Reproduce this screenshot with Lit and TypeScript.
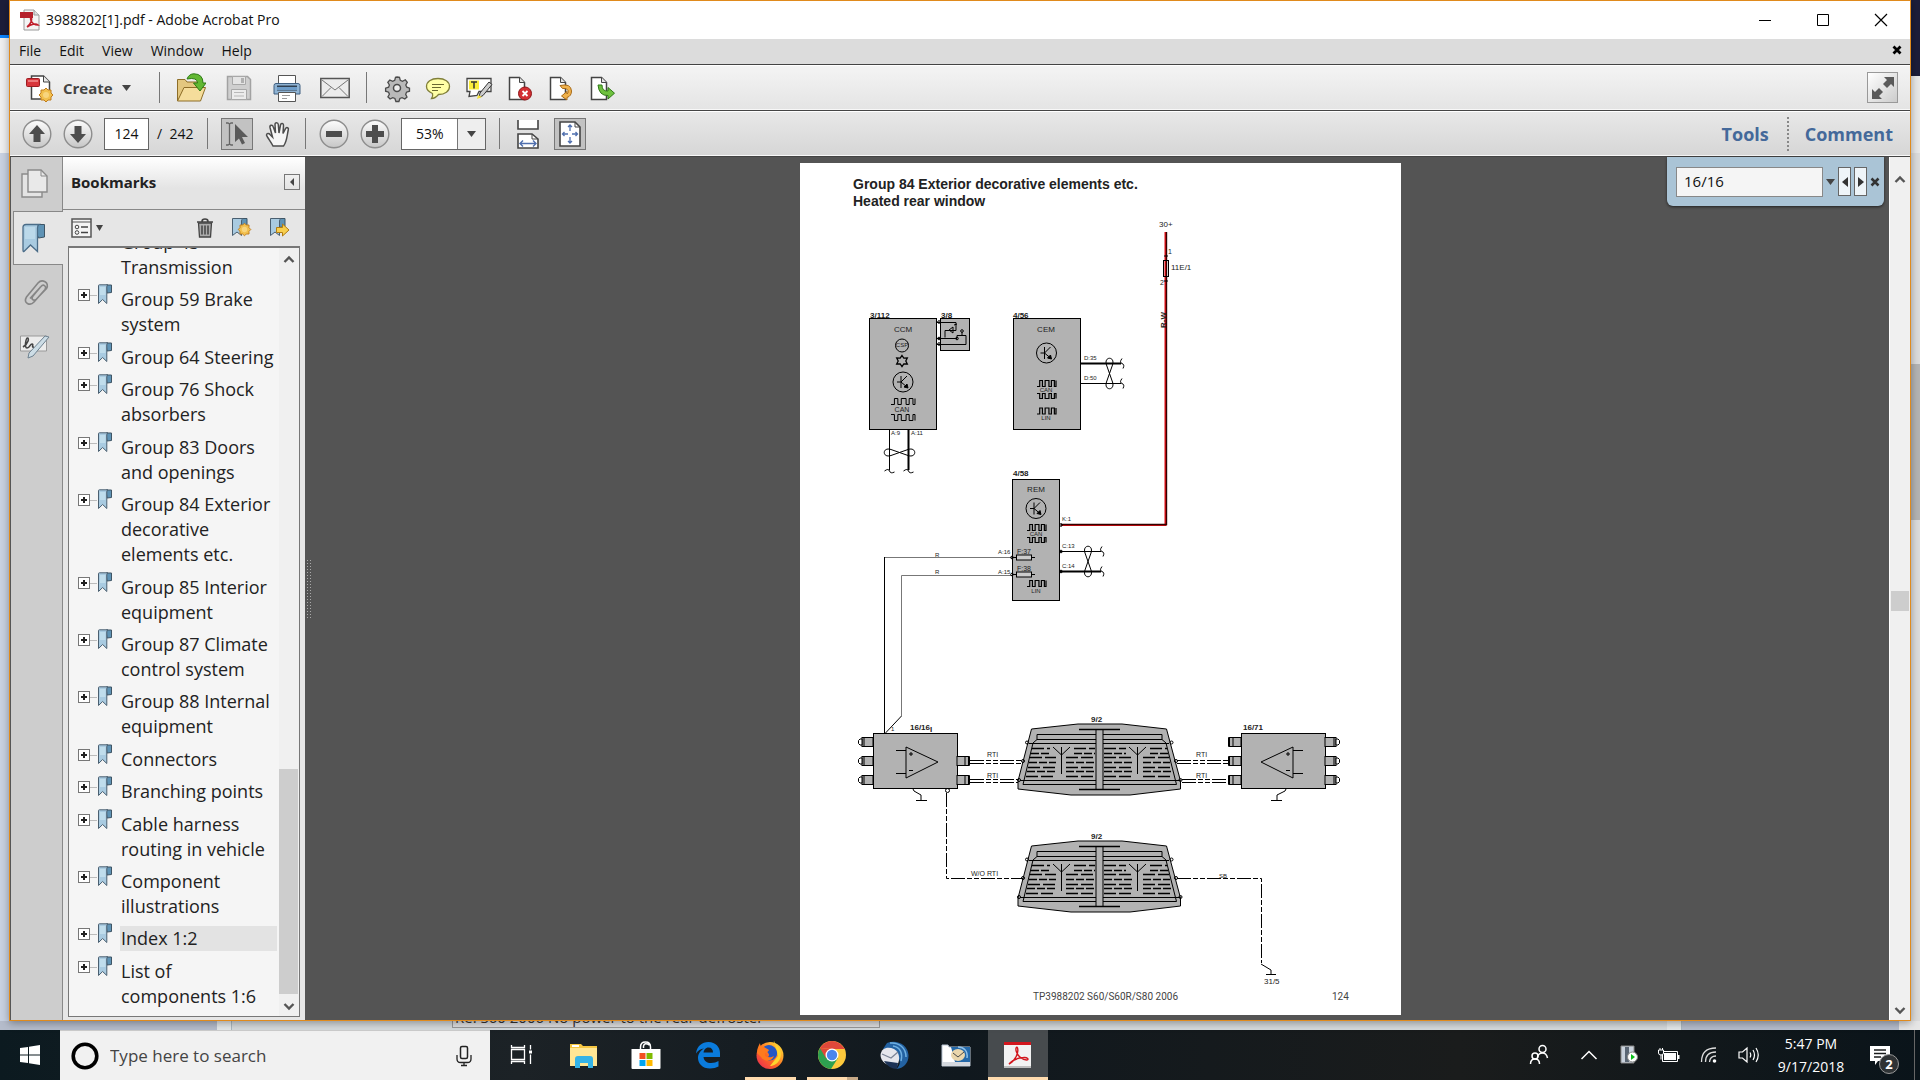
import { LitElement, html, svg, css } from "lit";
import { customElement } from "lit/decorators.js";
import { classMap } from "lit/directives/class-map.js";

/* ---------- shared icon pieces ---------- */

const icon = (w: number, h: number, body: unknown) => html`
  <svg width=${w} height=${h} viewBox="0 0 ${w} ${h}" aria-hidden="true" fill="none">${body}</svg>`;

const ribbon = html`
  <svg class="ribbon" width="16" height="21" viewBox="0 0 16 21" aria-hidden="true">
    <path d="M9 1h5.500v7.500L10 9z" fill="#5f93b5" stroke="#3f5565" />
    <path d="M1.500 1.500Q1.500.8 2.500.8H11Q9.800 1 9.800 3V19.500L5.600 15.500 1.500 19.500z" fill="#a9cbe1" stroke="#4a5f70" />
    <path d="M3 3h5.500v8H3z" fill="#c0ddec" />
  </svg>`;

const pageShape = svg`<path d="M6.500 2.500h10l5 5v17h-15z" fill="#fff" stroke="#444" stroke-width="1.500"/><path d="M16.500 2.500v5h5" fill="#e4e4e4" stroke="#444"/>`;

const burst = (x: number, y: number) => svg`
  <path transform="translate(${x} ${y})" d="M0-7 2-5 5-5 5-2 7 0 5 2 5 5 2 5 0 7-2 5-5 5-5 2-7 0-5-2-5-5-2-5z" fill="#f2c04e" stroke="#c07c1c"/>
  <circle cx=${x} cy=${y} r="3" fill="#f8d57e"/>`;

const icons = {
  pdf: icon(20, 22, svg`
    <path d="M4 1h10l5 5v15H4z" fill="#f4f4f4" stroke="#9a9a9a"/><path d="M14 1v5h5" fill="#ddd" stroke="#9a9a9a"/>
    <path d="M0 3h13v6H0z" fill="#b5202c"/>
    <path d="M7 18C11 15 12 11 11.500 9 11 7.500 10 9 11 11.500 12 14 15 16 18 16 16 14 11 15 7 18z" stroke="#c01f2c" stroke-width="1.600"/>`),
  create: icon(28, 30, svg`
    <path d="M5.500 3h12l6 6v17h-18z" fill="#fff" stroke="#444" stroke-width="1.500"/><path d="M17.500 3v6h6" fill="#e8e8e8" stroke="#444"/>
    <rect x=".5" y="5.500" width="13" height="8" rx="1" fill="#d8363c" stroke="#9c1c22"/><path d="M2 7h10v2H2z" fill="#ec7a7c"/>
    ${burst(20, 22)}`),
  open: icon(30, 30, svg`
    <path d="M1.500 28V6.500H9l2 2.500h12v6" fill="#e3c77f" stroke="#8d6d27"/>
    <path d="M1.500 28 8 14.500h21.500L24.500 28z" fill="#f5dd9b" stroke="#8d6d27"/>
    <path d="M11 6Q13 .8 18 .8 27 1 27 10h3l-6 8-6.500-8h4Q21.500 4 11 6z" fill="#62b832" stroke="#2c7a14"/>`),
  save: icon(30, 30, svg`
    <path d="M3.500 3.500h20l3 3v20h-23z" fill="#cfcfcf" stroke="#a2a2a2" stroke-width="1.500"/>
    <path d="M8.500 3.500h13v8h-13z" fill="#e4e4e4" stroke="#a8a8a8"/><path d="M17 5h3v5h-3z" fill="#b0b0b0"/>
    <path d="M7.500 16.500h15v10h-15z" fill="#ececec" stroke="#a8a8a8"/><path d="M10 19.500h10M10 23h10" stroke="#b8b8b8"/>`),
  print: icon(30, 30, svg`
    <path d="M6.500 2.500h17v10h-17z" fill="#fff" stroke="#555"/>
    <path d="M2 12.500Q2 10.500 4 10.500H26Q28 10.500 28 12.500V21H2z" fill="#8fb3d3" stroke="#3f5f80"/><path d="M5 12.500h20v5H5z" fill="#2f3f50"/>
    <path d="M5 14h20v3H5z" fill="#6d9cc8"/><path d="M6.500 19.500h17v9h-17z" fill="#fff" stroke="#555"/><path d="M10 22.500h8M10 25.500h5" stroke="#999"/>`),
  mail: icon(30, 30, svg`
    <path d="M.8 5.500h28.400v19H.8z" fill="#ececec" stroke="#555" stroke-width="1.500"/><path d="M2 7l13 10L28 7M2 23.500l9-9M28 23.500l-9-9" stroke="#777"/>`),
  gear: icon(28, 30, svg`
    <path d="M14 4l2.500.3.8 3 2.200 1 2.800-1.500 2 2.500-1.500 2.700 1 2.200 2.700 1v3l-3 1-.8 2.200 1.300 2.600-2.200 2-2.700-1.300-2.200.8-1 3h-3l-1-3-2.200-.8-2.600 1.300-2.200-2.200 1.500-2.600-.8-2-3-1v-3l3-1 .8-2.200L4.800 9.300l2-2.300 2.900 1.300 2-1 .8-3z" fill="#b9b9b9" stroke="#4a4a4a" stroke-width="1.300"/>
    <circle cx="14" cy="15" r="3.500" fill="#eee" stroke="#4a4a4a" stroke-width="1.500"/>`),
  comment: icon(28, 30, svg`
    <path d="M14 5.500c7 0 11.500 3.500 11.500 8s-4.500 8-11 8c-2.500 3-5.500 4-7 4 1-1.500 1.500-3.500 1-5C5 19 2.500 17 2.500 13.500 2.500 9 7 5.500 14 5.500z" fill="#ffffa6" stroke="#807f3a" stroke-width="1.300"/>
    <path d="M8 11.500h12M8 14.500h9M8 17.500h6" stroke="#6a6830"/>`),
  highlight: icon(28, 30, svg`
    <path d="M2 5.500h24v13H14l-2 4-8 1 1-5H2z" fill="#fff" stroke="#444" stroke-width="1.300"/><path d="M4 7.500h10v9H4z" fill="#fbee3b"/>
    <path d="M6 9h6M9 9v6.500" stroke="#333" stroke-width="1.500"/>
    <path d="M24 9l3 2.500-9 11-4 2 1-4.500z" fill="#ccc" stroke="#333"/><path d="M13 22l4 2-5 2z" fill="#f6e33c"/>`),
  pageX: icon(28, 30, svg`<g transform="translate(-3 2)">${pageShape}</g>
    <circle cx="19" cy="20.500" r="6.500" fill="#d32f33" stroke="#8e1417"/><path d="M16.500 18l5 5M21.500 18l-5 5" stroke="#fff" stroke-width="1.800"/>`),
  pageUndo: icon(28, 30, svg`<g transform="translate(-3 2)">${pageShape}</g>
    <path d="M13 12.500Q24 10 24.500 18q0 5-4.500 6.500V27l-5.500-4 5.500-4.500v2.500q1.500-1 1-3.500-1-3-5.500-2z" fill="#f0b24c" stroke="#a86a16"/>`),
  pageGo: icon(28, 30, svg`<g transform="translate(-3 2)">${pageShape}</g>
    <path d="M10 12h4q0 6.500 6 6v-3.500l6.500 5.700L20 26v-3.500q-9 .5-10-10.500z" fill="#6fc13f" stroke="#2f7a17"/>`),
  hand: icon(28, 30, svg`
    <path d="M9 27C7 23 3 18 2.500 16c0-2 2.500-2 3.500-.5L8.500 18 6 8.500c-.5-2.500 2.500-3 3.200-.8L11.500 14 11 5.500c0-2.500 3-2.500 3.300 0L15 14l1.500-8c.5-2.300 3.300-1.700 3 .6L19 14.500l2.500-4.800c1-2 3.500-1 2.800 1C23 16 23 23 19.500 27z" fill="#f6f6f6" stroke="#4d4d4d" stroke-width="1.500"/>`),
  pick: icon(28, 28, svg`
    <path d="M3 3h2l1.500 1L8 3h2M3 25h2l1.500-1L8 25h2M6.500 4v20" stroke="#666" stroke-width="1.300"/>
    <path d="M12 4v18l4-3.500 3 6 3-1.500-3-6h6z" fill="#5a5a5a"/>`),
  fitWidth: icon(30, 32, svg`
    <path d="M5 2v9h20V2" fill="#fff" stroke="#444" stroke-width="1.600"/>
    <path d="M5 30V16h14l6 5v9z" fill="#fff" stroke="#444" stroke-width="1.600"/><path d="M19 16v5h6" stroke="#444"/>
    <path d="M7 25.500h16M10 22.500l-3 3 3 3M20 22.500l3 3-3 3" stroke="#4f6fae" stroke-width="1.400"/>`),
  fitPage: icon(28, 28, svg`
    <path d="M4 2h15l5 5v19H4z" fill="#fff" stroke="#444" stroke-width="1.600"/><path d="M19 2v5h5" stroke="#444"/>
    <path d="M14 5v6M14 17v6M7 14h5M16 14h5M12 7l2-2 2 2M12 21l2 2 2-2M8.500 12l-2 2 2 2M19.500 12l2 2-2 2" stroke="#4f6fae" stroke-width="1.300"/>`),
  expand: icon(28, 28, svg`
    <path d="M15 3h10v10l-3-3-4 4-4-4 4-4zM3 15l3 3 4-4 4 4-4 4 3 3H3z" fill="#5a5a5a"/>`),
  pages: icon(30, 32, svg`
    <path d="M2 6h20v23H2z" fill="#e4e4e4" stroke="#8a8a8a" stroke-width="1.400"/>
    <path d="M8 2h13l6 6v16H8z" fill="#e9e9e9" stroke="#8a8a8a" stroke-width="1.400"/><path d="M21 2v6h6" stroke="#8a8a8a"/>`),
  bookmark: icon(26, 32, svg`
    <path d="M12 2.500h11.500V15l-6 1z" fill="#5f93b5" stroke="#3f5565"/>
    <path d="M2 5Q2 2.500 5 2.500H18Q16.500 3.500 16.500 6V29.500L9.500 23 3 29.500Q2 30 2 28z" fill="#a9cbe1" stroke="#4a6c88" stroke-width="1.300"/>
    <path d="M4 5h10v12H4z" fill="#bcd9ea"/>`),
  clip: icon(28, 30, svg`
    <path d="M9 21.500 20 9.500c2.500-3 6 0 4 3L13 25c-4 4.500-11 1-7.500-5L17 6c4-4.500 12-.5 8.500 5.500L15.500 22c-3 2.500-6 0-3.500-3L19.500 10" stroke="#858585" stroke-width="1.600"/>`),
  sign: icon(32, 26, svg`
    <path d="M1.500 3h26v15h-26z" fill="#ececec" stroke="#999"/><path d="M4 14C10 10 10 5 8.500 5S5 15 8 15s3-4 5-4-1 4 2 3" stroke="#444" stroke-width="1.600"/>
    <path d="M26 3l4 1-16 19-5 2 1-5z" fill="#cddde6" stroke="#6f8290"/>`),
  options: icon(21, 20, svg`
    <path d="M1 1h19v18H1z" fill="#f4f4f4" stroke="#555" stroke-width="1.500"/><path d="M1 4h19" stroke="#555"/>
    <circle cx="6" cy="9" r="1.800" stroke="#444"/><circle cx="6" cy="14.500" r="1.800" stroke="#444"/><path d="M10 9h7M10 14.500h7" stroke="#444" stroke-width="1.500"/>`),
  trash: icon(18, 20, svg`
    <path d="M2.500 5h13L14.500 19h-11z" fill="#aaa" stroke="#444" stroke-width="1.300"/><path d="M1 4h16M6 3.500q0-2.500 3-2.500t3 2.500" stroke="#444" stroke-width="1.600"/>
    <path d="M6 7.500v9M9 7.500v9M12 7.500v9" stroke="#333" stroke-width="1.300"/>`),
  bmNew: icon(21, 22, svg`
    <path d="M8 1.500h8v8l-5 1z" fill="#5f93b5" stroke="#3f5565"/><path d="M1.500 1.500H12q-1.500 1-1.500 2.500V18.500l-4.500-3.500-4.500 3.500z" fill="#a9cbe1" stroke="#4a5f70"/>
    <g transform="translate(13.500 12.500) scale(.9)">${burst(0, 0)}</g>`),
  bmGo: icon(21, 22, svg`
    <path d="M8 1.500h8v8l-5 1z" fill="#5f93b5" stroke="#3f5565"/><path d="M1.500 1.500H12q-1.500 1-1.500 2.500V18.500l-4.500-3.500-4.500 3.500z" fill="#a9cbe1" stroke="#4a5f70"/>
    <path d="M7.500 10.500h6V7l6.500 6-6.500 6v-3.500h-6z" fill="#f8cf4e" stroke="#b07c14"/>`),
};

const disc = (shape: unknown) => icon(30, 30, svg`
  <defs><linearGradient id="disc" x2="0" y2="1"><stop offset="0" stop-color="#fdfdfd"/><stop offset="1" stop-color="#c6c6c6"/></linearGradient></defs>
  <circle cx="15" cy="15" r="13.800" fill="url(#disc)" stroke="#8d8d8d" stroke-width="1.400"/>${shape}`);

const chev = (up: boolean) => icon(12, 9, svg`<path d=${up ? "M1.500 7 6 2.500 10.500 7" : "M1.500 2 6 6.500 10.500 2"} stroke="#555" stroke-width="2.400"/>`);
const caret = (s: number) => icon(s, 6, svg`<path d="M0 0h${s}l-${s / 2} 6z" fill="#444"/>`);

/* ---------- wiring diagram ---------- */

const wave = (x: number, y: number, w: number, h: number, down = false) => {
  const u = w / 7;
  const a = down ? y : y + h;
  const b = down ? y + h : y;
  return svg`<path d="M${x} ${a}h${u}V${b}h${u}V${a}h${u}V${b}h${u * 1.4}V${a}h${u * 0.9}V${b}h${u * 1.1}V${a}h${u * 0.6}V${b}"/>`;
};

const transistor = (x: number, y: number) => svg`
  <circle cx=${x} cy=${y} r="10"/>
  <path d="M${x - 2} ${y - 6}v12M${x - 6} ${y}h4l6-6M${x - 2} ${y}l6 5"/>
  <path d="M${x + 5} ${y + 6}l-4-1 3-3z" fill="#000"/>`;

const loopV = (x: number, y1: number, y2: number) => svg`
  <path d="M${x - 3} ${y1 + 7}C${x - 6} ${y1 - 2} ${x + 6} ${y1 - 2} ${x + 3} ${y1 + 7}L${x - 3} ${y2 - 7}C${x - 6} ${y2 + 2} ${x + 6} ${y2 + 2} ${x + 3} ${y2 - 7}z"/>`;
const loopH = (y: number, x1: number, x2: number) => svg`
  <path d="M${x1 + 7} ${y - 3}C${x1 - 2} ${y - 6} ${x1 - 2} ${y + 6} ${x1 + 7} ${y + 3}L${x2 - 7} ${y - 3}C${x2 + 2} ${y - 6} ${x2 + 2} ${y + 6} ${x2 - 7} ${y + 3}z"/>`;
const endV = (x: number, y: number) => svg`<path d="M${x} ${y - 5}q-3 4 0 5q3 1 1 5"/>`;
const endH = (x: number, y: number) => svg`<path d="M${x - 5} ${y}q4-3 5 0q1 3 5 1"/>`;

const plug = (x: number, y: number, dir: number) => svg`
  <g transform="translate(${x} ${y}) scale(${dir} 1)">
    <rect x="0" y="-4.500" width="11" height="9" fill="#b2b2b2"/><path d="M9 -4.500v9"/>
    <path d="M11-3h2l1.500 1.500v3L13 3h-2z" fill="#fff"/>
  </g>`;
const socket = (x: number, y: number, dir: number) => svg`
  <g transform="translate(${x} ${y}) scale(${dir} 1)">
    <rect x="0" y="-4.500" width="12" height="9" fill="#b2b2b2"/><path d="M8-4.500v9"/><path d="M12-4.500v9" stroke-width="2"/>
  </g>`;

const rows = [748.5, 753.5, 757.5, 762.5, 767.5, 771.5, 776.5];
const antenna = (x: number) => svg`<path d="M${x - 8.5} 747l8.500 8 8.500-8M${x} 747v27"/>`;
const rearWindow = (dy: number) => svg`
  <g transform="translate(0 ${dy})">
    <path d="M1031.500 729 1078 724h44l44.500 5 14 52v8l-50.500 6h-59l-53-6v-8z" fill="#b2b2b2"/>
    <path d="M1037 734.500h59M1103 734.500h59v5M1037 734.500v5M1037 739.500h59M1103 739.500h59M1029 743.500h67M1103 743.500h66M1037 739.500l-4 3.500-10 41.500h73M1162 739.500l4 3.500 10.500 41.500h-73.500M1020 780.500h76M1103 780.500h77"/>
    <path d="M1079 729.500h41M1079 789.500h41" stroke-width="1.500"/><path d="M1096 730v59M1103 730v59"/>
    ${rows.map((y, i) => svg`<path stroke-width="1.300" stroke-dasharray=${i % 2 ? "8 2" : "12 3"} d="M${1032 - i} ${y}H${i < 2 ? 1050 : 1056}M${i < 2 ? 1074 : 1066} ${y}H1095M1104 ${y}H${i < 2 ? 1126 : 1132}M${i < 2 ? 1150 : 1143} ${y}H${1167 + i}"/>`)}
    ${antenna(1061.5)}${antenna(1137.5)}
    <circle cx="1027" cy="742.500" r="1.500"/><circle cx="1171.500" cy="742.500" r="1.500"/>
    <circle cx="1019" cy="780" r="1.500"/><circle cx="1180.500" cy="780" r="1.500"/>
    <circle cx="1023" cy="761" r="1.500"/><circle cx="1176" cy="761" r="1.500"/>
    <text class="b" x="1091" y="722">9/2</text>
  </g>`;

const diagram = html`
<svg class="page" viewBox="800 163 601 852" role="img" aria-label="Heated rear window wiring diagram">
  <rect x="800" y="163" width="601" height="852" fill="#fff"/>
  <text class="h" x="853" y="189">Group 84 Exterior decorative elements etc.</text>
  <text class="h" x="853" y="206">Heated rear window</text>

  <g fill="none" stroke="#000">
    <path d="M1165.500 232v293H1061" stroke="#e00d12" stroke-width="2"/><path d="M1166.500 232v292.500H1061" stroke="#300" stroke-width="1.400"/>
    <rect x="1163.500" y="260.500" width="5" height="16"/><path d="M1164 256h4M1164 281h4"/>

    <g fill="#b2b2b2">
      <rect x="869.500" y="318.500" width="67" height="111"/>
      <rect x="940.500" y="318.500" width="29" height="32"/>
      <rect x="1013.500" y="318.500" width="67" height="111"/>
      <rect x="1012.500" y="479.500" width="47" height="121"/>
      <rect x="873.500" y="733.500" width="84" height="55"/>
      <rect x="1241.500" y="733.500" width="84" height="55"/>
    </g>

    <circle cx="902" cy="345.500" r="6.500"/>
    <path d="M902 355.500l1.800 2.700 3.500-.2-1.500 3 1.500 3-3.500-.2-1.800 2.700-1.800-2.700-3.500.2 1.500-3-1.500-3 3.500.2z" stroke-width="1.300"/>
    ${transistor(903, 382)}${wave(891, 398.5, 24, 6)}${wave(891, 414.5, 24, 6, true)}
    <path d="M937 322.500h19v8h-11v7M937 338.500h20v-3h9M937 344.500h29v-9M949 330l4-3v6zM962 332v3M954 325l3-1"/>
    <circle cx="962" cy="331" r="1.300"/><circle cx="939" cy="338.500" r="1.300"/><circle cx="939" cy="344" r="1.300"/><circle cx="939" cy="322" r="1.300"/><circle cx="957" cy="338.500" r="1.300"/>
    ${transistor(1046.5, 353)}
    <g stroke-width="1.200">${wave(1037, 380.5, 19, 6)}${wave(1037, 393.5, 19, 5, true)}${wave(1037, 408, 19, 6)}
    ${wave(1027, 524.5, 19, 6)}${wave(1027, 537.5, 19, 5, true)}${wave(1027, 580.5, 19, 6)}</g>
    <path d="M1081 363.500h40M908.500 430v40M1060 571.500h41" stroke-width="2"/>
    <path d="M1081 383.500h40M889.500 430v40M1060 551.500h41"/>
    ${loopV(1109.5, 358, 389)}${endV(1122, 363.5)}${endV(1122, 383.5)}
    ${loopH(452.5, 884, 915)}${endH(889.5, 471)}${endH(908.5, 471)}
    ${loopV(1088, 546, 577)}${endV(1102, 551.5)}${endV(1102, 571.5)}
    ${transistor(1036, 508.5)}
    <path d="M1012 557.500H884.500M1012 575.500H901.500V716" stroke="#777"/>
    <path d="M884.500 557v176M901.500 716l-16 17"/>
    <path d="M1012 557.500h23M1012 574.500h23"/><g fill="#ccc"><rect x="1016.500" y="555" width="15" height="5"/><rect x="1016.500" y="572" width="15" height="5"/></g>
    <circle cx="1012" cy="557.500" r="1.300"/><circle cx="1012" cy="574.500" r="1.300"/><circle cx="1061" cy="525" r="1.300"/><circle cx="1061" cy="551.500" r="1.300"/><circle cx="1061" cy="571.500" r="1.300"/>

    ${[742, 761, 780].map((y) => svg`${plug(873, y, -1)}${plug(1325, y, 1)}${socket(1241, y, -1)}`)}
    ${[761, 780].map((y) => svg`${socket(957, y, 1)}`)}
    <path d="M906 747v31l32-16zM896 750.500h10M896 773.500h10M909 754h4M911 752v4M909 770.500h4"/>
    <path d="M1293 747v31l-32-16zM1293 750.500h10M1293 773.500h10M1286 754h4M1288 752v4M1286 770.500h4"/>
    <path d="M913 789l1 2 7 4v5M916 800.500h11M1286 789l-1 2-8 4v5M1271 800.500h11M1261 964l10 6v4M1266 974.500h10"/>
    <circle cx="947.500" cy="790.500" r="2"/>
    <g stroke-dasharray="14 2 5 2 5 2">
      <path d="M970 760.500h53M970 763.500h53M970 779.500h48M970 782.500h48M1177 760.500h53M1177 763.500h53M1182 779.500h48M1182 782.500h48"/>
      <path d="M946.500 793v85.500H1023M1177 878.500h84.500V963"/>
    </g>
    ${rearWindow(0)}${rearWindow(117)}
  </g>

  <g>
    <text class="l" x="1159" y="227">30+</text><text x="1168" y="254">1</text><text x="1160" y="285">2</text><text class="l" x="1171" y="270">11E/1</text>
    <text class="b" transform="translate(1166 328) rotate(-90)">R-W</text>
    <text class="b" x="870" y="318">3/112</text><text class="b" x="941" y="318">3/8</text><text class="b" x="1013" y="318">4/56</text><text class="b" x="1013" y="476">4/58</text>
    <text class="l m" x="903" y="332">CCM</text><text class="l m" x="1046" y="332">CEM</text><text class="l m" x="1036" y="492">REM</text>
    <text class="s m" x="902" y="347">CSP</text><text class="m" x="902" y="412">CAN</text>
    <text class="s m" x="1046" y="392">CAN</text><text class="s m" x="1046" y="420">LIN</text><text class="s m" x="1036" y="536">CAN</text><text class="s m" x="1036" y="593">LIN</text>
    <text class="s" x="1084" y="360">D:35</text><text class="s" x="1084" y="380">D:50</text><text class="s" x="891" y="435">A:9</text><text class="s" x="911" y="435">A:11</text>
    <text class="s" x="1062" y="521">K:1</text><text class="s" x="1062" y="548">C:13</text><text class="s" x="1062" y="568">C:14</text>
    <text class="s" x="998" y="554">A:16</text><text class="s" x="998" y="574">A:15</text><text x="1017" y="554">F:37</text><text x="1017" y="571">F:38</text>
    <text class="s" x="935" y="557">R</text><text class="s" x="935" y="574">R</text><text class="s" x="891" y="731">1</text>
    <text class="b" x="910" y="730">16/16</text><text class="b" x="930" y="732">I</text><text class="b" x="1243" y="730">16/71</text>
    <text x="987" y="757">RTI</text><text x="987" y="778">RTI</text><text x="1196" y="757">RTI</text><text x="1196" y="778">RTI</text>
    <text x="971" y="876">W/O RTI</text><text class="s" x="1219" y="878">SB</text><text class="l" x="1264" y="984">31/5</text>
  </g>
  <text class="f" x="1033" y="1000">TP3988202 S60/S60R/S80 2006</text><text class="f" x="1332" y="1000">124</text>
</svg>`;

/* ---------- bookmarks panel ---------- */

const bookmarks = [
  "Group 43 Transmission", "Group 59 Brake system", "Group 64 Steering", "Group 76 Shock absorbers",
  "Group 83 Doors and openings", "Group 84 Exterior decorative elements etc.", "Group 85 Interior equipment",
  "Group 87 Climate control system", "Group 88 Internal equipment", "Connectors", "Branching points",
  "Cable harness routing in vehicle", "Component illustrations", "Index 1:2", "List of components 1:6",
];

@customElement("bookmark-panel")
class BookmarkPanel extends LitElement {
  static styles = css`
    :host { display: flex; width: 295px; font-family: "Open Sans", "Noto Sans", sans-serif; color: #222; }
    button { border: 0; padding: 0; background: none; font: inherit; color: inherit; display: flex; align-items: center; justify-content: center; }
    svg { display: block; flex: none; }
    .strip { width: 53px; box-sizing: border-box; background: #cdcdcd; border-right: 1px solid #888; display: flex; flex-direction: column; border-left: 1px solid #555; }
    .strip button { height: 54px; box-sizing: border-box; padding-right: 4px; }
    .strip button.on { background: #e6e6e6; border: 1px solid #888; border-right: 0; margin: 0 -1px 0 2px; padding-right: 9px; }
    .body { flex: 1; min-width: 0; display: flex; flex-direction: column; background: #e6e6e6; }
    .head { height: 53px; box-sizing: border-box; border-bottom: 1px solid #888; background: linear-gradient(#fff, #e4e4e4 60%); display: flex; align-items: center; justify-content: space-between; padding: 0 5px 2px 8px; }
    h2 { margin: 0; font-size: 15px; font-weight: 700; }
    .fold { width: 16px; height: 16px; border: 1px solid #777; box-sizing: border-box; }
    .tools { height: 36px; display: flex; align-items: center; padding: 0 15px 0 8px; gap: 17px; }
    .tools .opt { gap: 4px; margin-right: auto; }
    .box { flex: 1; min-height: 0; margin: 0 5px 3px 5px; border: 1px solid #777; border-width: 2px 1px 1px; background: #f5f5f5; display: flex; }
    .list { flex: 1; min-width: 0; margin: 0; padding: 0 2px 7px 9px; list-style: none; display: flex; flex-direction: column; justify-content: space-between; overflow: hidden; }
    li { display: flex; align-items: flex-start; font-size: 18px; line-height: 25px; }
    li:first-child { margin-top: -18px; }
    li:first-child .plus, li:first-child .ribbon { visibility: hidden; }
    .plus { flex: none; width: 12px; height: 12px; box-sizing: border-box; border: 1px solid #777; background: #fff; position: relative; margin-top: 2px; }
    .plus::before { content: ""; position: absolute; left: 2px; right: 2px; top: 4px; height: 2px; background: #222; }
    .plus::after { content: ""; position: absolute; top: 2px; bottom: 2px; left: 4px; width: 2px; background: #222; }
    .stem { flex: none; width: 7px; height: 1px; background: #bbb; margin-top: 8px; }
    .ribbon { margin-top: -3px; }
    a { flex: 1; min-width: 0; margin-left: 7px; padding-left: 1px; color: #222; text-decoration: none; }
    .cur a { background: #e3e3e3; }
    .scroll { width: 20px; background: #f0f0f0; display: flex; flex-direction: column; align-items: center; padding: 7px 0 5px; box-sizing: border-box; }
    .track { flex: 1; align-self: stretch; display: flex; flex-direction: column; justify-content: flex-end; margin: 3px 1px 8px 0; }
    .thumb { height: 31%; background: #cdcdcd; }
  `;

  render() {
    return html`
      <nav class="strip" aria-label="Navigation panes">
        <button aria-label="Pages">${icons.pages}</button>
        <button class="on" aria-label="Bookmarks">${icons.bookmark}</button>
        <button aria-label="Attachments">${icons.clip}</button>
        <button aria-label="Signatures">${icons.sign}</button>
      </nav>
      <section class="body">
        <header class="head"><h2>Bookmarks</h2>
          <button class="fold" aria-label="Collapse">${icon(6, 8, svg`<path d="M5 0v8L1 4z" fill="#444"/>`)}</button></header>
        <div class="tools">
          <button class="opt" aria-label="Options">${icons.options}${caret(7)}</button>
          <button aria-label="Delete">${icons.trash}</button>
          <button aria-label="New bookmark">${icons.bmNew}</button>
          <button aria-label="Go to bookmark">${icons.bmGo}</button>
        </div>
        <div class="box">
          <ul class="list">
            ${bookmarks.map((b) => html`
              <li class=${classMap({ cur: b === "Index 1:2" })}>
                <span class="plus"></span><span class="stem"></span>${ribbon}<a href="#">${b}</a>
              </li>`)}
          </ul>
          <div class="scroll">${chev(true)}<div class="track"><div class="thumb"></div></div>${chev(false)}</div>
        </div>
      </section>`;
  }
}

/* ---------- taskbar ---------- */

const taskIcons: { name: string; art: unknown; state?: string }[] = [
  { name: "Task View", art: icon(28, 28, svg`<path d="M3.500 8.500h13v10h-13zM3.500 4v2.500h13V4M3.500 23v-2.500h13V23M22.500 4v4.500M22.500 13.500V23" stroke="#fff" stroke-width="1.300"/><path d="M21 9.500h3v3h-3z" fill="#fff"/>`) },
  { name: "File Explorer", art: icon(30, 28, svg`<path d="M1 3h11l2 2h14v20H1z" fill="#f5c642"/><path d="M1 7h27v18H1z" fill="#ffe694"/><path d="M3 4h7v2H3z" fill="#fff"/><path d="M6 27V18q0-3 3-3h12q3 0 3 3v9h-5v-5h-8v5z" fill="#35b3e6"/>`) },
  { name: "Microsoft Store", art: icon(30, 30, svg`<path d="M9.500 10V7q0-5 5-5t5 5v3M12.500 8V6q1-4 6-1" stroke="#fff" stroke-width="1.500"/><path d="M.5 9h29v19q0 1-1 1h-27q-1 0-1-1z" fill="#fff"/><path d="M8.500 13h6v6h-6z" fill="#f25022"/><path d="M15.500 13h6v6h-6z" fill="#7fba00"/><path d="M8.500 20h6v6h-6z" fill="#00a4ef"/><path d="M15.500 20h6v6h-6z" fill="#ffb900"/>`) },
  { name: "Microsoft Edge", art: icon(28, 28, svg`<path d="M2 12.500C3 5 8 1 14.500 1 21.500 1 26 6 26 12v4H9.500c.5 4 3.500 6 7.500 6 3 0 5.500-.7 7.500-2v5.500c-2.500 1.300-5 2-8.500 2C8.500 27.500 4 22.500 4 17c0-4 2.500-7.500 6-9.500C6.500 8 4 9.500 2 12.500zM9.500 11.500H19C19 8.500 17.500 6.500 14.500 6.500S10 9 9.500 11.500z" fill="#0a7bdc"/>`) },
  { name: "Firefox", state: "open", art: icon(30, 30, svg`<defs><linearGradient id="ff" x1="0" y1="1" x2="1" y2="0"><stop offset="0" stop-color="#e6225a"/><stop offset=".45" stop-color="#ff6a22"/><stop offset="1" stop-color="#fff13a"/></linearGradient></defs>
    <circle cx="15" cy="15.500" r="13.500" fill="url(#ff)"/><path d="M19 .5c-1 4 3 4 5.500 8.500 4 7-1 17-9.500 17l8-10z" fill="#ffd52e"/><path d="M8 8c5-6 13-2 14 4 1 6-5 10-10 8 4 0 4-3 1-3 3-3-1-5-5-9z" fill="#2457c5"/><path d="M2 13C2 8 4 5 5 3c0 2 1 4 3 4 2 0 4 2 6 3-1 3-5 2-4 5s6 3 9 1c-2 6-10 6-13 1z" fill="#ff7a1e"/>`) },
  { name: "Google Chrome", state: "open multi", art: icon(30, 30, svg`<circle cx="15" cy="15" r="14" fill="#fdc93c"/><path d="M15 15 2.900 8A14 14 0 0 0 14 29l7-11z" fill="#2ea04f"/><path d="M2.900 8A14 14 0 0 1 27.100 8L28 9H15z" fill="#e0483a"/><path d="M2.900 8l6.200 10.500L15 9z" fill="#e0483a"/><circle cx="15" cy="15" r="6.500" fill="#fff"/><circle cx="15" cy="15" r="5.200" fill="#4a86ee"/>`) },
  { name: "Thunderbird", art: icon(30, 30, svg`<path d="M8 3C17-1 29 4 29.500 15c.3 8-5 13-12 14 4-4 4-8 2-11L4 9z" fill="#2362a2"/><path d="M11 3c9-1 16 5 16 14M14 6c7 1 10 7 8 15" stroke="#6fb0e2" stroke-width="1.500"/><path d="M1.500 15C2 8 9 6 15 9c5 3 7 9 3 17C9 27 1.500 22 1.500 15z" fill="#e6e6ec"/><path d="M3 14l9 4 7-6" stroke="#7c8496" stroke-width="1.300"/><path d="M5 21c3 5 8 8 13 8l1-6z" fill="#1d3356"/>`) },
  { name: "Mail", art: icon(30, 28, svg`<path d="M1 4h6l1 2h21v19H1z" fill="#fff" stroke="#b8c4d2"/><path d="M1 21h28v4H1z" fill="#d4d8de"/><path d="M10 6h19v15H14z" fill="#2468a8"/><ellipse cx="17" cy="14" rx="7" ry="6" fill="#ead6ac"/><path d="M12 12l5 4 6-5" stroke="#4a4a4a"/><path d="M17 6c6 0 10 4 9 11" stroke="#8fc1ea" stroke-width="1.500"/>`) },
  { name: "Adobe Acrobat", state: "active", art: icon(30, 30, svg`<path d="M1 2h27v26H1z" fill="#f2f2f2"/><path d="M1 2h27v3H1z" fill="#d2161d"/><path d="M1 26h27v2H1z" fill="#bdbdbd"/><path d="M6 24c6-3 10-11 8.500-16-.7-2-2.500 0-1 4 1.500 4 6 8 10 8 3 0 1-3-3-2.500C15 18 10 19 6 24z" stroke="#d2161d" stroke-width="1.400"/>`) },
];

@customElement("task-bar")
class TaskBar extends LitElement {
  static styles = css`
    :host { display: flex; height: 50px; background: linear-gradient(90deg, #0c1a20, #1c2226 27%, #10181e 50%, #1a1c1c 76%, #0a141a); color: #fff; font-family: "Open Sans", "Noto Sans", sans-serif; }
    button { border: 0; padding: 0; background: none; color: inherit; display: flex; align-items: center; justify-content: center; font: inherit; }
    svg { display: block; flex: none; }
    .start { width: 60px; }
    .search { width: 430px; box-sizing: border-box; background: #f1f1f1; border-top: 1px solid #ccc; display: flex; align-items: center; padding: 0 18px 0 11px; gap: 11px; }
    .search input { flex: 1; min-width: 0; border: 0; background: none; outline: 0; font: 17px "Open Sans", sans-serif; padding: 0; }
    .search input::placeholder { color: #444; opacity: 1; }
    .apps { display: flex; gap: 2px; padding-left: 2px; flex: 1; }
    .apps button { width: 60px; height: 50px; border-bottom: 3px solid transparent; border-top: 3px solid transparent; box-sizing: border-box; }
    .apps .active { background: #474b4e; border-bottom-color: #ffdbae; border-top-color: #474b4e; }
    .apps .open { background: linear-gradient(#ffdbae, #ffdbae) no-repeat 50% 100% / 51px 3px; background-origin: border-box; }
    .apps .multi { background: linear-gradient(90deg, #ffdbae 78%, #c6a987 78%) no-repeat 50% 100% / 51px 3px; background-origin: border-box; }
    .tray { display: flex; align-items: center; }
    .tray button { width: 40px; height: 50px; }
    .tray .people { width: 60px; }
    .clock { width: 84px; text-align: center; font-size: 14px; line-height: 23px; }
    .tray .notes { width: 62px; border-right: 1px solid #666; margin-right: 5px; position: relative; justify-content: flex-start; padding-left: 16px; box-sizing: border-box; }
    .badge { position: absolute; left: 26px; top: 24px; width: 18px; height: 18px; border: 1px solid #999; border-radius: 50%; background: #2f3335; font-size: 13px; line-height: 18px; font-weight: 700; }
  `;

  render() {
    return html`
      <button class="start" aria-label="Start">${icon(22, 22, svg`<path d="M1 4l8-1v7.500H1zM10 2.800 21 1v9.500H10zM1 11.500h8V19l-8-1zM10 11.500h11V21l-11-1.800z" fill="#fff"/>`)}</button>
      <label class="search">
        ${icon(28, 28, svg`<circle cx="14" cy="14" r="11.800" stroke="#000" stroke-width="3.600"/>`)}
        <input type="text" placeholder="Type here to search" aria-label="Search">
        ${icon(16, 22, svg`<rect x="4.500" y="1.500" width="7" height="12" rx="1.500" stroke="#222" stroke-width="1.500"/><path d="M1 10v4q0 3.500 3.500 3.500h7q3.500 0 3.500-3.500v-4M8 17.500V21M5 20.500h6" stroke="#222" stroke-width="1.300"/>`)}
      </label>
      <nav class="apps" aria-label="Applications">
        ${taskIcons.map((t) => html`<button class=${t.state ?? "idle"} aria-label=${t.name}>${t.art}</button>`)}
      </nav>
      <div class="tray">
        <button class="people" aria-label="People">${icon(20, 22, svg`<circle cx="13.500" cy="5" r="3.500" stroke="#fff" stroke-width="1.500"/><path d="M8.500 13q1-4 5-4t5 5" stroke="#fff" stroke-width="1.500"/><circle cx="6" cy="12" r="3" stroke="#fff" stroke-width="1.500"/><path d="M1.500 20q0-5 4.500-5t4.500 5" stroke="#fff" stroke-width="1.500"/>`)}</button>
        <button aria-label="Show hidden icons">${icon(18, 12, svg`<path d="M1.500 10 9 2.500 16.500 10" stroke="#fff" stroke-width="1.500"/>`)}</button>
        <button aria-label="Device">${icon(20, 20, svg`<path d="M2 1h13v17H2z" fill="#c9d2dd" stroke="#888"/><path d="M6 2h4v15H6z" fill="#5a6674"/><circle cx="13.500" cy="12" r="5" fill="#fff" stroke="#888"/><path d="M12 9l4 3-4 3z" fill="#0bbf1a"/>`)}</button>
        <button aria-label="Battery">${icon(22, 16, svg`<path d="M4.500 4.500h15v10h-15z" stroke="#fff"/><path d="M6 6h12v7H6z" fill="#fff"/><path d="M20.500 8v4" stroke="#fff" stroke-width="2"/><path d="M.5 3h5v3q0 2-2.500 2T.5 6zM2 1v2M4.500 1v2M3 8v4.500" fill="#10181c" stroke="#fff"/>`)}</button>
        <button aria-label="Network">${icon(18, 18, svg`<path d="M1.500 16Q1.500 2 16 2M5.500 16Q5.500 6 16 6M9.500 16Q10 10 16 10" stroke="#ddd" stroke-width="1.300"/><circle cx="14.500" cy="15" r="1.800" fill="#fff"/>`)}</button>
        <button aria-label="Volume">${icon(22, 18, svg`<path d="M1 6h3.500L9 2v14L4.500 12H1zM12 6.500q1.500 2.500 0 5M15 4q3 5 0 10M18 2q4.500 7 0 14" stroke="#fff" stroke-width="1.200"/>`)}</button>
        <div class="clock">5:47 PM<br>9/17/2018</div>
        <button class="notes" aria-label="Notifications">${icon(22, 20, svg`<path d="M1 1h20v15H9l-3 4v-4H1z" fill="#fff"/><path d="M5 5h12M5 8.500h12M5 12h7" stroke="#1a1c1c" stroke-width="1.300"/>`)}<span class="badge">2</span></button>
      </div>`;
  }
}

/* ---------- application ---------- */

@customElement("app-root")
class AppRoot extends LitElement {
  static styles = css`
    :host { display: flex; flex-direction: column; height: 100vh; font-family: "Open Sans", "Noto Sans", sans-serif; color: #111; overflow: hidden; }
    button { border: 0; padding: 0; background: none; color: inherit; display: flex; align-items: center; justify-content: center; font: inherit; }
    svg { display: block; flex: none; }
    input, select { font: inherit; color: inherit; box-sizing: border-box; }
    .desktop { flex: 1; min-height: 0; position: relative; padding: 0 9px 9px; display: flex; }
    .behind { position: absolute; inset: 0; display: grid; grid-template-columns: 9px 1fr 9px; background: #d5dadc; }
    .behind-left { background: linear-gradient(#1c1d3a 35px, #0a84ff 35px 38px, #f0f0f0 38px 153px, #c9d2e2 153px); }
    .behind-right { background: linear-gradient(#1c1d3a 76px, #e8e8e8 76px 153px, #dcdcdc 153px 364px, #b4b4b4 364px 520px, #dcdcdc 520px); grid-column: 3; }
    .behind-base { position: absolute; left: 0; right: 0; bottom: 0; height: 9px; display: flex; overflow: hidden; font-size: 15px; }
    .base-side { width: 217px; background: #b5bccb; }
    .base-edge { width: 14px; background: #e4e8e9; border-right: 1px solid #aab8c0; }
    .base-mid { flex: 1; padding-left: 220px; }
    .base-field { width: 428px; box-sizing: border-box; height: 7px; border: 1px solid #999; border-top: 0; background: #dfdfe0; overflow: hidden; padding-left: 2px; color: #333; }
    .base-field span { display: block; margin-top: -15px; line-height: 22px; }
    .base-end { width: 21px; background: #e6e6e6; }

    .window { position: relative; flex: 1; min-width: 0; display: flex; flex-direction: column; border: 1px solid #e08a1c; background: #545454; box-sizing: border-box; box-shadow: 0 2px 8px rgba(0, 0, 0, .35); }
    .title { height: 38px; background: #fff; display: flex; align-items: center; padding-left: 10px; font-size: 14px; }
    .title h1 { font: inherit; margin: 0; padding: 0 0 2px 6px; flex: 1; }
    .title button { width: 58px; height: 38px; }
    .menu { height: 25px; box-sizing: border-box; background: #dcdcdc; display: flex; align-items: center; padding: 0 8px 3px 9px; gap: 18px; font-size: 14px; }
    .menu a { color: #111; text-decoration: none; }
    .menu button { margin-left: auto; }
    .bar { height: 46px; box-sizing: border-box; border-top: 1px solid #444; display: flex; align-items: center; box-shadow: inset 0 1px #fff, inset 0 -1px #f8f8f8; }
    .bar.one { background: linear-gradient(#f4f4f4, #e4e4e4); padding: 0 12px 0 16px; }
    .bar.two { background: linear-gradient(#e8e8e8, #d6d6d6); border-bottom: 1px solid #444; height: 47px; padding: 0 17px 0 12px; }
    .create { width: 117px; justify-content: flex-start; gap: 9px; font-weight: 700; font-size: 15px; color: #444; }
    .sep { width: 1px; height: 31px; background: #777; margin: 0 16px; }
    .two .sep { margin: 0 13px; }
    .files { display: flex; gap: 18px; }
    .edits { display: flex; gap: 13px; }
    .full { margin-left: auto; width: 31px; height: 31px; box-sizing: border-box; border: 1px solid #999; background: linear-gradient(135deg, #fff, #ccc); }
    .steps { display: flex; gap: 11px; align-items: center; }
    .num { width: 45px; height: 32px; border: 1px solid #666; background: #fff; text-align: center; padding: 0; font-size: 14px; }
    .total { width: 37px; margin-left: 8px; font-size: 14px; white-space: pre; }
    .group { display: flex; gap: 11px; align-items: center; }
    .pressed { width: 32px; height: 32px; box-sizing: border-box; border: 1px solid #777; background: #c2c2c2; }
    .zoom { display: grid; width: 85px; height: 32px; border: 1px solid #666; box-sizing: border-box; background: #fff; }
    .zoom select { grid-area: 1 / 1; appearance: none; border: 0; background: none; padding: 0 0 0 14px; font-size: 14px; }
    .zoom span { grid-area: 1 / 1; justify-self: end; width: 27px; border-left: 1px solid #777; background: #eee; display: flex; align-items: center; justify-content: center; pointer-events: none; }
    .side { margin-left: auto; display: flex; align-items: center; font-weight: 700; font-size: 18px; color: #44699a; }
    .side i { border-left: 2px dotted #888; height: 34px; margin: 0 16px 0 18px; }

    .work { flex: 1; min-height: 0; display: flex; }
    .grip { width: 7px; display: flex; align-items: center; justify-content: center; }
    .grip i { width: 6px; height: 60px; background: radial-gradient(circle, #aaa 1px, transparent 1px) 0 0 / 3px 3px; }
    .view { flex: 1; min-width: 0; position: relative; display: flex; justify-content: center; padding: 6px 0 5px; box-sizing: border-box; }
    .page { height: 100%; width: auto; aspect-ratio: 601 / 852; }
    .find { position: absolute; right: 5px; top: 0; height: 49px; width: 217px; box-sizing: border-box; background: #aac4d6; border-radius: 0 0 6px 6px; box-shadow: 0 1px 3px rgba(0, 0, 0, .6); display: flex; align-items: center; padding: 0 4px 0 9px; gap: 3px; }
    .find input { width: 147px; height: 30px; border: 1px solid #888; background: #f5f5f5; padding: 0 7px 2px; font-size: 15px; }
    .find .step { width: 14px; height: 29px; border: 1px solid #666; background: #eef4f8; box-sizing: border-box; }
    .scroll { width: 21px; background: #f0f0f0; display: flex; flex-direction: column; align-items: center; padding: 18px 0 5px; box-sizing: border-box; border-left: 1px solid #fff; }
    .track { flex: 1; align-self: stretch; padding: 407px 0 0; box-sizing: border-box; margin: 0 1px; }
    .thumb { height: 20px; background: #cdcdcd; }

    .page text { font: 7px "Liberation Sans", Arial, sans-serif; fill: #222; }
    .page text.s { font-size: 6px; }
    .page text.l { font-size: 8px; }
    .page text.m { text-anchor: middle; }
    .page text.b { font-size: 8px; font-weight: 700; }
    .page text.h { font-size: 14px; font-weight: 700; }
    .page text.f { font: 10px Roboto, "Liberation Sans", sans-serif; fill: #444; }
    .page g text { stroke: none; }
  `;

  render() {
    return html`
      <div class="desktop">
        <div class="behind">
          <div class="behind-left"></div><div class="behind-right"></div>
          <div class="behind-base">
            <div class="base-side"></div><div class="base-edge"></div>
            <div class="base-mid"><div class="base-field"><span>Re: S60 2006 No power to the rear defroster</span></div></div>
            <div class="base-edge"></div><div class="base-side"></div><div class="base-end"></div>
          </div>
        </div>
        <main class="window">
          <header class="title">${icons.pdf}<h1>3988202[1].pdf - Adobe Acrobat Pro</h1>
            <button aria-label="Minimize">${icon(14, 14, svg`<path d="M1 7.500h12" stroke="#000"/>`)}</button>
            <button aria-label="Maximize">${icon(14, 14, svg`<path d="M1.500 1.500h11v11h-11z" stroke="#000"/>`)}</button>
            <button aria-label="Close">${icon(14, 14, svg`<path d="M1 1l12 12M13 1 1 13" stroke="#000" stroke-width="1.200"/>`)}</button>
          </header>
          <nav class="menu" aria-label="Menu bar">
            ${["File", "Edit", "View", "Window", "Help"].map((m) => html`<a href="#">${m}</a>`)}
            <button aria-label="Close document">${icon(10, 10, svg`<path d="M1.500 1.500l7 7M8.500 1.500l-7 7" stroke="#000" stroke-width="2.800"/>`)}</button>
          </nav>
          <div class="bar one">
            <button class="create">${icons.create}<span>Create</span>${caret(9)}</button>
            <div class="sep"></div>
            <div class="files">
              <button aria-label="Open">${icons.open}</button><button aria-label="Save">${icons.save}</button>
              <button aria-label="Print">${icons.print}</button><button aria-label="Email">${icons.mail}</button>
            </div>
            <div class="sep"></div>
            <div class="edits">
              <button aria-label="Preferences">${icons.gear}</button><button aria-label="Comment">${icons.comment}</button>
              <button aria-label="Highlight">${icons.highlight}</button><button aria-label="Delete pages">${icons.pageX}</button>
              <button aria-label="Rotate pages">${icons.pageUndo}</button><button aria-label="Extract pages">${icons.pageGo}</button>
            </div>
            <button class="full" aria-label="Full screen">${icons.expand}</button>
          </div>
          <div class="bar two">
            <div class="steps">
              <button aria-label="Previous page">${disc(svg`<path d="M15 6l8 9h-4.500v8h-7v-8H7z" fill="#4d4d4d"/>`)}</button>
              <button aria-label="Next page">${disc(svg`<path d="M15 24l8-9h-4.500V7h-7v8H7z" fill="#4d4d4d"/>`)}</button>
              <input class="num" type="text" value="124" aria-label="Page">
            </div>
            <span class="total">/  242</span>
            <div class="sep"></div>
            <div class="group"><button class="pressed" aria-label="Select">${icons.pick}</button><button aria-label="Hand">${icons.hand}</button></div>
            <div class="sep"></div>
            <div class="group">
              <button aria-label="Zoom out">${disc(svg`<path d="M7 12h16v6H7z" fill="#4d4d4d"/>`)}</button>
              <button aria-label="Zoom in">${disc(svg`<path d="M12 6h6v6h6v6h-6v6h-6v-6H6v-6h6z" fill="#4d4d4d"/>`)}</button>
              <label class="zoom"><select aria-label="Zoom level"><option>53%</option></select><span>${caret(9)}</span></label>
            </div>
            <div class="sep"></div>
            <div class="group"><button aria-label="Fit width">${icons.fitWidth}</button><button class="pressed" aria-label="Fit page">${icons.fitPage}</button></div>
            <div class="side"><button>Tools</button><i></i><button>Comment</button></div>
          </div>
          <div class="work">
            <bookmark-panel></bookmark-panel>
            <div class="grip"><i></i></div>
            <div class="view">
              ${diagram}
              <div class="find">
                <input type="text" value="16/16" aria-label="Find">
                <button aria-label="Find options">${caret(9)}</button>
                <button class="step" aria-label="Previous">${icon(6, 10, svg`<path d="M6 0v10L0 5z" fill="#333"/>`)}</button>
                <button class="step" aria-label="Next">${icon(6, 10, svg`<path d="M0 0v10l6-5z" fill="#333"/>`)}</button>
                <button aria-label="Close find">${icon(10, 10, svg`<path d="M1.500 1.500l7 7M8.500 1.500l-7 7" stroke="#333" stroke-width="2.500"/>`)}</button>
              </div>
            </div>
            <div class="scroll">${chev(true)}<div class="track"><div class="thumb"></div></div>${chev(false)}</div>
          </div>
        </main>
      </div>
      <task-bar></task-bar>`;
  }
}
